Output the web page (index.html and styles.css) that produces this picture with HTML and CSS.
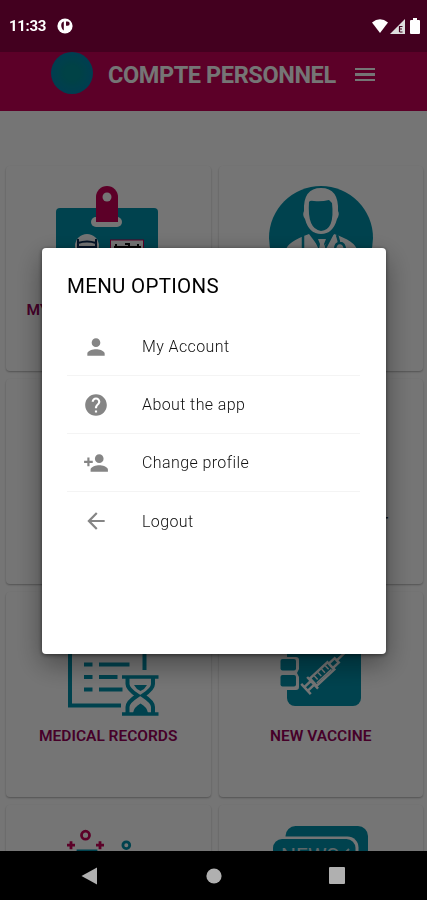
FILE: index.html
```html
<!DOCTYPE html>
<html lang="en">
<head>
    <meta charset="UTF-8">
    <title>Menu Options</title>
    <link rel="stylesheet" href="styles.css">
</head>
<body>
    <div class="screen">
        <div class="status-bar">
            <div class="status-left">
                <span>11:33</span>
                <svg width="16" height="16" viewBox="0 0 16 16">
                    <circle cx="8" cy="8" r="7.6" fill="#fff"/>
                    <path d="M6.8 3.4C3.6 4 3.2 9.500 6.800 12.600ZM9 3.600h1.600a2 2 0 0 1 0 4.200H9z" fill="#43001f"/>
                </svg>
            </div>
            <div class="status-right">
                <svg width="16" height="14" viewBox="0 0 16 14"><path d="M0 3.500Q8-3 16 3.500L8 14z" fill="#fff"/></svg>
                <svg width="15" height="15" viewBox="0 0 15 15">
                    <path d="M0 15L15 0v15z" fill="#ddd"/>
                    <path d="M9.500 13V7.500h3M9.500 10h2.500M9.500 13h3" fill="none" stroke="#43001f" stroke-width="1.200"/>
                </svg>
                <svg class="battery" width="10" height="16" viewBox="0 0 10 16"><path d="M3 0h4v2h2q1 0 1 1v12q0 1-1 1H1q-1 0-1-1V3q0-1 1-1h2z" fill="#fff"/></svg>
            </div>
        </div>

        <div class="header">
            <div class="avatar"></div>
            <h1>COMPTE PERSONNEL</h1>
            <div class="burger">
                <span></span>
                <span></span>
                <span></span>
            </div>
        </div>

        <div class="cards">
            <div class="card">
                <svg class="card-icon" viewBox="0 0 104 104">
                    <rect x="0" y="22" width="102" height="80" rx="4" fill="#0091ab"/>
                    <rect x="35" y="31" width="31" height="10" rx="5" fill="#fff"/>
                    <path d="M40 36V11a11 11 0 0 1 22 0v25z" fill="#c80057"/>
                    <circle cx="51" cy="11" r="4.500" fill="#fff"/>
                    <circle cx="31" cy="60" r="12" fill="#fff"/>
                    <path d="M22 53v10M40 53v10M22 57q9-3 18 0M22 61h18" fill="none" stroke="#0b2b55" stroke-width="2"/>
                    <rect x="54.500" y="54" width="33" height="20" fill="#fff" stroke="#c80057"/>
                    <path d="M60 58v6M64 60v4M69 58h4v4M77 60v4M82 58v6M58 61h27" fill="none" stroke="#111" stroke-width="2"/>
                </svg>
                <p>MY VACCINE RECORDS</p>
            </div>
            <div class="card">
                <svg class="card-icon" viewBox="0 0 104 104">
                    <circle cx="52" cy="52" r="52" fill="#0091ab"/>
                    <path d="M35 25Q34 2 52 2T69 25Q71 28 68 33Q64 48 52 48T36 33Q33 29 35 25z" fill="#fff"/>
                    <path d="M40 16Q41 14 45 15Q52 16 60 14L63 17Q66 44 52 45Q38 43 40 16z" fill="#0091ab"/>
                    <path d="M17 64Q18 56 40 48L52 64L65 48Q86 55 88 64V80H17z" fill="#fff"/>
                    <path d="M34 50V66M44 47L53 68L64 47M68 49Q70 55 70 57M66 64Q66 57 71 57T76 65" fill="none" stroke="#0091ab" stroke-width="2.500"/>
                    <path d="M49 53h8l-2 5 3 10h-9l2-10z" fill="#fff"/>
                </svg>
                <p>MY DOCTOR</p>
            </div>
            <div class="card">
                <div class="card-icon"></div>
                <p>CALENDAR</p>
            </div>
            <div class="card">
                <div class="card-icon"></div>
                <p class="dark">MY APPOINTMENT</p>
            </div>
            <div class="card">
                <svg class="card-icon" viewBox="0 0 104 104" fill="none" stroke="#0091ab" stroke-width="4">
                    <path d="M65 93.500H14V2H88.500V58"/>
                    <path d="M28 52.500h8.500M43 52.500h30.500M28 65h8.500M43 65h18.500M28 77.500h8.500M43 77.500h23.500"/>
                    <path d="M66 65h36.500M66 102h36.500" stroke-width="3.500"/>
                    <path d="M71.500 66v6q0 5 10 11.500q-10 6.500-10 11.500v6M97 66v6q0 5-10 11.500q10 6.500 10 11.500v6"/>
                    <path d="M78 73h13q-2 4-6.500 6q-4.500-2-6.500-6zM77 101q1-6 7.500-9.500q6.500 3.500 7.500 9.500z" fill="#0091ab" stroke="none"/>
                </svg>
                <p>MEDICAL RECORDS</p>
            </div>
            <div class="card">
                <svg class="card-icon" viewBox="0 0 104 104">
                    <rect x="18" y="0" width="74" height="94" rx="8" fill="#0091ab"/>
                    <path d="M10 45h17q3 0 3 3v9l-2 4 2 4v10q0 3-3 3H10z" fill="#fff"/>
                    <rect x="11.500" y="47" width="15.500" height="11.500" rx="2" fill="#0091ab"/>
                    <rect x="11.500" y="63" width="15.500" height="11.500" rx="2" fill="#0091ab"/>
                    <g transform="translate(37 77) rotate(-43)" fill="none" stroke="#fff" stroke-width="2.500">
                        <path d="M0-7V7M9-8V8M0-2.500h9M0 2.500h9M34-3h8v6h-8M42 0h12"/>
                        <rect x="10" y="-5" width="24" height="10"/>
                        <path d="M15-4v5M20-4v5M25-4v5M30-4v5M12 3h20" stroke-width="1.500"/>
                    </g>
                </svg>
                <p>NEW VACCINE</p>
            </div>
            <div class="card">
                <svg class="card-icon" viewBox="0 0 104 104" fill="none" stroke="#c80057" stroke-width="2.800">
                    <circle cx="29.500" cy="10.200" r="4"/>
                    <path d="M11 20.200h8M15 16.200v8M40 20.200h8M44 16.200v8"/>
                    <circle cx="70.300" cy="20.200" r="3.400" stroke="#0091ab"/>
                    <path d="M22 26h18v30H22z" stroke="#0091ab"/>
                </svg>
            </div>
            <div class="card">
                <svg class="card-icon" viewBox="0 0 104 104">
                    <rect x="16.500" y="1" width="82.500" height="60" rx="10" fill="#0091ab"/>
                    <rect x="2" y="11.500" width="87.500" height="60" rx="11" fill="#fff"/>
                    <rect x="4" y="14" width="82.500" height="60" rx="9" fill="#0091ab"/>
                    <text x="12" y="38" class="news-text">NEWS</text>
                    <path d="M74 30l6-6" stroke="#c9dfe3" stroke-width="2"/>
                </svg>
            </div>
        </div>

        <div class="nav-bar">
            <svg width="17" height="18" viewBox="0 0 17 18"><path d="M16 .5v17L.5 9z"/></svg>
            <svg width="16" height="16" viewBox="0 0 16 16"><circle cx="8" cy="8" r="7.600"/></svg>
            <svg width="16" height="17" viewBox="0 0 16 17"><rect width="16" height="17" rx="1"/></svg>
        </div>
    </div>

    <div class="overlay">
        <div class="dialog">
            <h2>MENU OPTIONS</h2>
            <ul class="menu">
                <li>
                    <svg viewBox="0 0 24 24"><path d="M12 12c2.210 0 4-1.790 4-4s-1.790-4-4-4-4 1.790-4 4 1.790 4 4 4zm0 2c-2.670 0-8 1.340-8 4v2h16v-2c0-2.660-5.330-4-8-4z"/></svg>
                    <span>My Account</span>
                </li>
                <li>
                    <svg viewBox="0 0 24 24"><path d="M12 2C6.480 2 2 6.480 2 12s4.480 10 10 10 10-4.480 10-10S17.520 2 12 2zm1 17h-2v-2h2v2zm2.070-7.750l-.9.920C13.450 12.900 13 13.500 13 15h-2v-.5c0-1.100.45-2.100 1.170-2.830l1.240-1.260c.37-.36.590-.86.590-1.410 0-1.100-.9-2-2-2s-2 .9-2 2H8c0-2.210 1.790-4 4-4s4 1.790 4 4c0 .88-.36 1.680-.93 2.250z"/></svg>
                    <span>About the app</span>
                </li>
                <li>
                    <svg viewBox="0 0 24 24"><path d="M15 12c2.210 0 4-1.790 4-4s-1.790-4-4-4-4 1.790-4 4 1.790 4 4 4zm-9-2V7H4v3H1v2h3v3h2v-3h3v-2H6zm9 4c-2.670 0-8 1.340-8 4v2h16v-2c0-2.660-5.330-4-8-4z"/></svg>
                    <span>Change profile</span>
                </li>
                <li>
                    <svg viewBox="0 0 24 24"><path d="M20 11H7.830l5.590-5.590L12 4l-8 8 8 8 1.410-1.410L7.830 13H20v-2z"/></svg>
                    <span>Logout</span>
                </li>
            </ul>
        </div>
    </div>
</body>
</html>
```
FILE: styles.css
```css
* {
    box-sizing: border-box;
}

body {
    font-family: Roboto, "Liberation Sans", sans-serif;
    margin: 0;
    height: 900px;
    overflow: hidden;
    background-color: #fff;
}

h1, h2, p, ul {
    margin: 0;
    padding: 0;
}

.screen {
    display: flex;
    flex-direction: column;
    height: 900px;
}

/* Status bar */
.status-bar {
    flex: none;
    height: 52px;
    padding: 0 7px 0 9px;
    display: flex;
    justify-content: space-between;
    align-items: center;
    background-color: #920044;
}

.status-left,
.status-right {
    display: flex;
    align-items: center;
    position: relative;
    z-index: 2;
    color: #fff;
}

.status-left {
    gap: 11px;
    font-size: 15px;
    font-weight: bold;
    letter-spacing: -0.3px;
}

.status-right {
    gap: 2px;
}

.battery {
    margin-left: 3px;
}

/* Header */
.header {
    flex: none;
    height: 59px;
    padding: 0 52px 14px 51px;
    display: flex;
    align-items: center;
    background-color: #c80057;
}

.avatar {
    width: 42px;
    height: 42px;
    margin-bottom: 4px;
    border-radius: 50%;
    background: radial-gradient(#009098 25%, #0086b0 70%);
}

.header h1 {
    margin-left: 15px;
    font-size: 23.5px;
    font-weight: bold;
    letter-spacing: -0.4px;
    color: #fff;
    white-space: nowrap;
}

.burger {
    width: 20px;
    margin-left: auto;
    display: flex;
    flex-direction: column;
    gap: 3.5px;
}

.burger span {
    height: 2.3px;
    background-color: #fff;
}

/* Cards */
.cards {
    flex: 1;
    min-height: 0;
    overflow: hidden;
    padding: 55px 4px 0 6px;
    display: grid;
    grid-template-columns: 1fr 1fr;
    grid-auto-rows: 205px;
    gap: 8px;
}

.card {
    display: flex;
    flex-direction: column;
    align-items: center;
    padding-top: 20px;
    border-radius: 4px;
    background-color: #fff;
    box-shadow: 0 1px 2px rgba(0, 0, 0, 0.3);
}

.card-icon {
    flex: none;
    width: 104px;
    height: 104px;
}

.card p {
    margin-top: 11px;
    font-size: 15.5px;
    line-height: 18px;
    font-weight: 600;
    color: #98005a;
    white-space: nowrap;
}

.card .dark {
    color: #222;
}

.news-text {
    font-size: 21px;
    fill: #c9dfe3;
}

/* Navigation bar */
.nav-bar {
    flex: none;
    height: 49px;
    padding: 0 82px 0 81px;
    display: flex;
    justify-content: space-between;
    align-items: center;
    position: relative;
    z-index: 2;
    background-color: #000;
    fill: #b0b0b0;
}

/* Dialog */
.overlay {
    position: fixed;
    top: 0;
    left: 0;
    width: 100%;
    height: 900px;
    padding: 52px 0 50px 1px;
    display: flex;
    justify-content: center;
    align-items: center;
    background-color: rgba(0, 0, 0, 0.54);
    z-index: 1;
}

.dialog {
    width: 344px;
    height: 406px;
    padding: 26px 26px 25px 25px;
    background: #fff;
    border-radius: 4px;
    box-shadow: 0 10px 28px rgba(0, 0, 0, 0.4), 0 1px 4px rgba(0, 0, 0, 0.5);
}

.dialog h2 {
    font-size: 20.5px;
    font-weight: 400;
    line-height: 25px;
    letter-spacing: 0.3px;
    color: #000;
}

.menu {
    margin-top: 19px;
    list-style: none;
}

.menu li {
    height: 58px;
    padding-left: 16px;
    display: flex;
    align-items: center;
    gap: 33px;
    border-bottom: 1px solid #f4f4f4;
    font-size: 16px;
    font-weight: 300;
    letter-spacing: 0.4px;
    color: #111;
}

.menu li:last-child {
    border-bottom: none;
}

.menu svg {
    width: 26px;
    height: 26px;
    fill: #858585;
}
```
